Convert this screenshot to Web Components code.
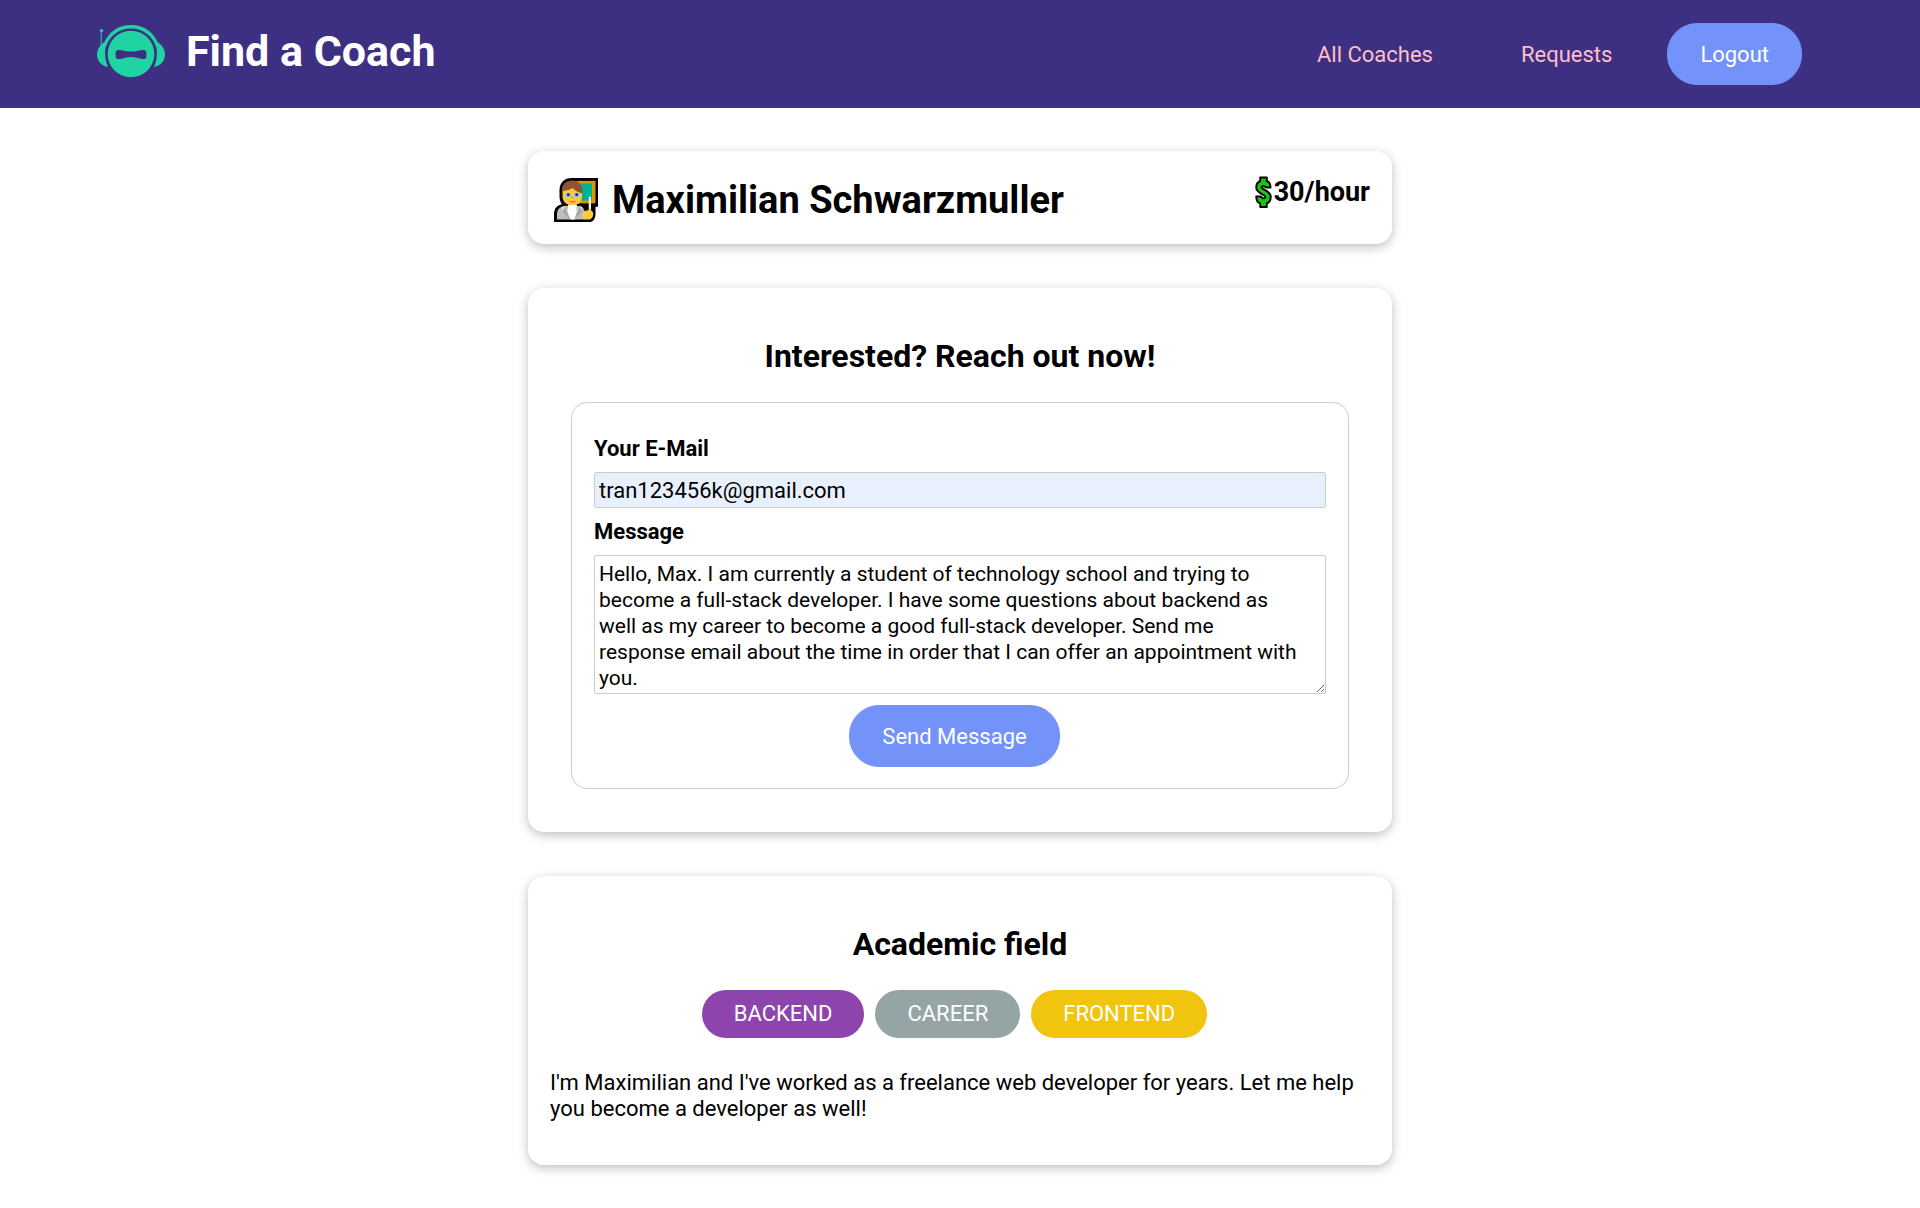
<!DOCTYPE html>
<html lang="en">
<head>
<meta charset="utf-8">
<title>Find a Coach</title>
<meta name="viewport" content="width=device-width, initial-scale=1">
<style>
  body { margin: 0; background: #fff; color: #000; font: 22px/26px Roboto, "Liberation Sans", sans-serif; }
</style>
</head>
<body>
<coach-app></coach-app>

<script>
const buttonStyles = `
  button {
    display: block; margin: 0; padding: 18px 32px 16px; border: 1px solid #7392fa; border-radius: 30px;
    background: #7392fa; color: #fff; font: inherit; cursor: pointer;
  }
  button:hover { background: #5f80ee; border-color: #5f80ee; }`;

function define(name, html) {
  const template = document.createElement('template');
  template.innerHTML = html;
  customElements.define(name, class extends HTMLElement {
    constructor() {
      super();
      this.attachShadow({ mode: 'open' }).append(template.content.cloneNode(true));
    }
  });
}

define('robot-logo', `
  <style>:host { display: block; width: 70px; height: 56px; } svg { display: block; }</style>
  <svg width="70" height="56" viewBox="0 0 70 56" fill="#20d3a2" aria-hidden="true">
    <path d="M5.300 22V9" stroke="#20d3a2" stroke-width="1.400" stroke-opacity=".7"/>
    <circle cx="5.500" cy="7.600" r="1.700"/>
    <path d="M7.500 21.500C12 9 22.500 2 35 2s23 7 27.500 19.500L60 24C56.500 12.500 46.500 5.600 35 5.600S13.500 12.500 10 24Z"/>
    <path d="M8.500 19C4 22 1 26.500 1 31.500 1 38 6 43.500 12 43.700 9 37 8.200 29 10 22.500ZM61.500 19C66 22 69 26.500 69 31.500 69 38 64 43.500 58 43.700 61 37 61.800 29 60 22.500Z"/>
    <circle cx="35" cy="31" r="23.300"/>
    <path fill="#3d3083" d="M19.600 30c0-2.500 1.700-3.300 4-2.900 4.200.8 7 1.500 11.400 1.500s7.200-.7 11.400-1.500c2.300-.4 4 .4 4 2.900v3.200c0 2.500-1.700 3.300-4 2.900-4.200-.8-7-2.100-11.400-2.100s-7.200 1.300-11.400 2.100c-2.300.4-4-.4-4-2.900Z"/>
  </svg>`);

define('teacher-icon', `
  <style>:host { display: block; width: 44px; height: 44px; } svg { display: block; }</style>
  <svg width="44" height="44" viewBox="0 0 44 46" preserveAspectRatio="none" aria-hidden="true">
    <path d="M18 0H44V30H41.500V37C41.500 43 39 46 35 46H0V38C0 32 3 28.500 8 27.500 6 25 5.500 22 5.500 18V13C5.500 5 10 0 18 0Z"/>
    <path fill="#de9500" d="M22 3H41.500V26.500H22Z"/>
    <path fill="#00b294" d="M25 5.800H38V23.500H25Z"/>
    <path fill="#bdbdbd" d="M3 43.500V38C3 32 7 29 13 29H22C28 29 31 32 31 38V43.500Z"/>
    <path fill="#e6e6e6" d="M7 31 11 29 20 43.500H17L11 35ZM29 31 26 29 17 43.500H21L26 35Z"/>
    <path fill="#a5a5a5" d="M11 29 16 43.500 9 35ZM26 29 20 43.500 28 35Z"/>
    <path fill="#fff" d="M14 28H23L22 37 20 43.500H17L14 36Z"/>
    <path fill="#ffc83d" d="M8.500 14C8.500 8 12 5 18 5S28 8 28 14V19C28 25 24 28.500 18.500 28.500S8.500 25 8.500 19Z"/>
    <path fill="#8e562e" d="M8 15C7 7 12 2.700 18.500 2.700S29 7.500 28.300 16C25 15.500 21 13.500 18.500 10.500 15 13 11.500 13 9.500 13.500Z"/>
    <path fill="#8bc9f3" d="M11 15.500H17V20H11ZM20 15.500H26V20H20Z"/>
    <circle cx="14.300" cy="17.500" r="1.500" fill="#17324b"/><circle cx="22.700" cy="17.500" r="1.500" fill="#17324b"/>
    <circle cx="18.500" cy="20.500" r="1.200" fill="#ef9324"/>
    <path fill="#f06b4f" d="M15 23.500C17 24.300 20 24.300 22 23.500 21.500 26.500 15.500 26.500 15 23.500Z"/>
    <path fill="#f0f0f0" d="M34.700 19.500H37V36H34.700Z"/>
    <path fill="#ffc83d" d="M28.500 38C29 34.500 31.500 34 34 34L36 31.500C37.500 32 37.200 34 37.500 34.500 40.500 35.500 39.500 42 36 43.500H31C28.500 42.500 28.300 40 28.500 38Z"/>
  </svg>`);

define('dollar-icon', `
  <style>:host { display: block; width: 17px; height: 32px; } svg { display: block; }</style>
  <svg width="17" height="32" viewBox="0 0 18 32" preserveAspectRatio="none" aria-hidden="true">
    <path fill="#16c60c" stroke="#000" stroke-width="2" stroke-linejoin="round" d="M5.500 1.500H12.500V5C15.500 6 16.500 8.500 16.500 11.500H11.500C11 10 7 9.500 7 11.500 7 13.500 16.700 14.500 16.700 21 16.700 24.500 15 26.500 12.500 27.500V31H5.500V27.500C2.500 26.500 1.300 24 1.300 20.500H6.500C7 22.500 11 23 11 20.800 11 18.500 1.300 17.500 1.300 11.500 1.300 8 3 6 5.500 5Z"/>
  </svg>`);

define('site-header', `
  <style>
    :host { display: block; background: #3d3083; }
    header { display: flex; justify-content: space-between; align-items: flex-start; flex-wrap: wrap; padding: 23px 5%; }
    .brand { display: flex; align-items: flex-start; gap: 20px; color: #fff; text-decoration: none; }
    h1 { margin: 0; font-size: 43px; line-height: 56px; font-weight: 700; }
    nav { display: flex; align-items: center; gap: 22px; margin-right: 22px; }
    nav a { padding: 18px 33px 16px; color: #ffbfc8; text-decoration: none; }
    ${buttonStyles}
  </style>
  <header>
    <a class="brand" href="#"><robot-logo></robot-logo><h1>Find a Coach</h1></a>
    <nav><a href="#coaches">All Coaches</a><a href="#requests">Requests</a><button type="button">Logout</button></nav>
  </header>`);

define('base-card', `
  <style>
    :host { display: block; box-sizing: border-box; padding: 22px; border-radius: 16px; background: #fff; box-shadow: 0 3px 11px rgba(0, 0, 0, .26); }
    ::slotted(h2) { margin: 27px 0; font-size: 32px; line-height: 38px; text-align: center; }
  </style>
  <slot></slot>`);

define('coach-badge', `
  <style>
    :host { display: block; padding: 11px 32px; border-radius: 24px; color: #fff; background: #8e44ad; text-transform: uppercase; }
    :host([area="career"]) { background: #95a5a6; }
    :host([area="frontend"]) { background: #f1c40f; }
  </style>
  <slot></slot>`);

define('contact-form', `
  <style>
    :host { display: block; margin: 0 21px 21px; }
    form { border: 1px solid #ccc; border-radius: 16px; padding: 22px 22px 21px; }
    .field { margin: 11px 0; }
    label { display: block; margin-bottom: 11px; line-height: 25px; font-weight: 700; }
    input, textarea {
      display: block; box-sizing: border-box; width: 100%; margin: 0; border: 1px solid #ccc; border-radius: 2px;
      font: inherit; color: #000; background: #fff;
    }
    input { height: 36px; padding: 0 4px; background: #e8f0fe; }
    textarea { height: 139px; padding: 5px 26px 2px 4px; font-size: 21px; resize: vertical; overflow: auto; }
    .actions { display: flex; justify-content: center; padding-right: 11px; }
    ${buttonStyles}
  </style>
  <form>
    <div class="field"><label for="email">Your E-Mail</label><input id="email" type="email" value="tran123456k@gmail.com"></div>
    <div class="field"><label for="message">Message</label><textarea id="message" rows="5">Hello, Max. I am currently a student of technology school and trying to become a full-stack developer. I have some questions about backend as well as my career to become a good full-stack developer. Send me response email about the time in order that I can offer an appointment with you.</textarea></div>
    <div class="actions"><button type="button">Send Message</button></div>
  </form>`);

define('coach-app', `
  <style>
    :host { display: block; }
    main { display: flex; flex-direction: column; gap: 44px; width: min(100% - 44px, 864px); margin: 43px auto; }
    .summary { display: flex; justify-content: space-between; align-items: flex-start; gap: 22px; }
    .name { display: flex; align-items: center; gap: 14px; padding: 5px 4px 0; }
    .name h1 { margin: 0; font-size: 38px; line-height: 44px; }
    .rate { display: flex; align-items: center; gap: 2px; margin-top: 3px; }
    .rate h3 { margin: 0; font-size: 27px; line-height: 32px; }
    .badges { display: flex; flex-wrap: wrap; justify-content: center; gap: 11px; padding-right: 11px; }
    .bio { margin: 32px 0 21px; }
  </style>
  <site-header></site-header>
  <main>
    <base-card>
      <div class="summary">
        <div class="name"><teacher-icon></teacher-icon><h1>Maximilian Schwarzmuller</h1></div>
        <div class="rate"><dollar-icon></dollar-icon><h3>30/hour</h3></div>
      </div>
    </base-card>
    <base-card><h2>Interested? Reach out now!</h2><contact-form></contact-form></base-card>
    <base-card>
      <h2>Academic field</h2>
      <div class="badges"><coach-badge area="backend">Backend</coach-badge><coach-badge area="career">Career</coach-badge><coach-badge area="frontend">Frontend</coach-badge></div>
      <p class="bio">I'm Maximilian and I've worked as a freelance web developer for years. Let me help you become a developer as well!</p>
    </base-card>
  </main>`);
</script>
</body>
</html>
